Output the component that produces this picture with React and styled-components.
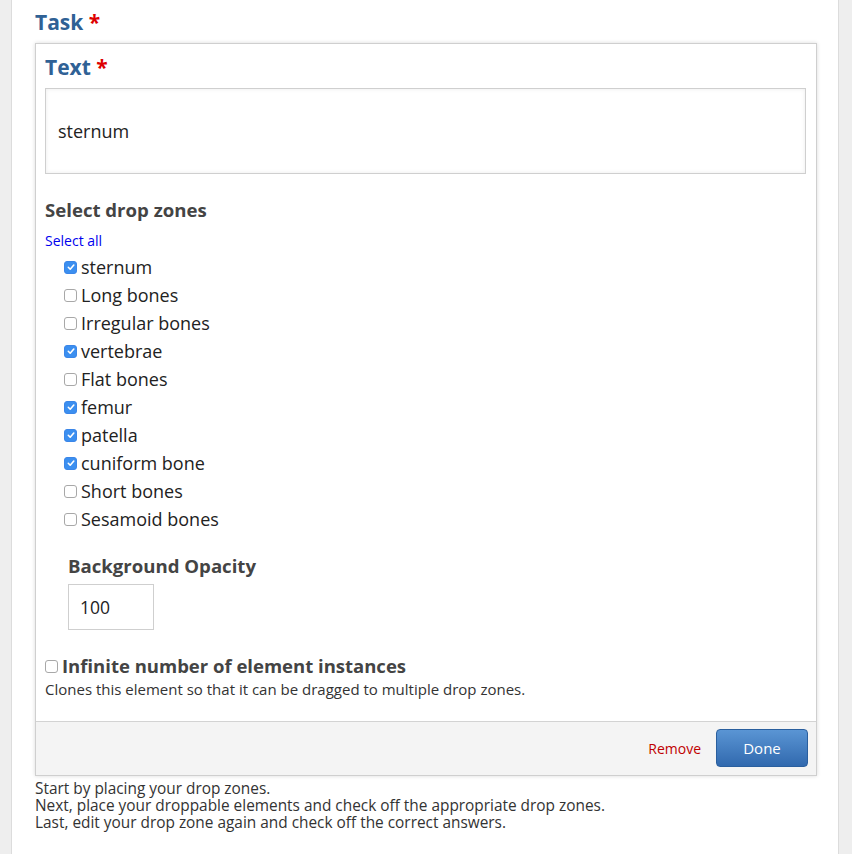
import styled, { createGlobalStyle } from "styled-components";

const GlobalStyle = createGlobalStyle`
  body {
    margin: 0;
    background: #eeeeee;
    font-family: "Open Sans", "Liberation Sans", sans-serif;
    color: #333;
  }
`;

const zones = [
  { id: 1, label: "sternum", checked: true },
  { id: 2, label: "Long bones", checked: false },
  { id: 3, label: "Irregular bones", checked: false },
  { id: 4, label: "vertebrae", checked: true },
  { id: 5, label: "Flat bones", checked: false },
  { id: 6, label: "femur", checked: true },
  { id: 7, label: "patella", checked: true },
  { id: 8, label: "cuniform bone", checked: true },
  { id: 9, label: "Short bones", checked: false },
  { id: 10, label: "Sesamoid bones", checked: false },
];

function Check({ checked }) {
  return (
    <CheckBox $checked={checked}>
      {checked && (
        <svg width="10" height="10" viewBox="0 0 10 10">
          <path
            d="M2.3 5.3 L4.2 7.2 L7.8 3"
            fill="none"
            stroke="#fff"
            strokeWidth="1.6"
            strokeLinecap="round"
            strokeLinejoin="round"
          />
        </svg>
      )}
    </CheckBox>
  );
}

function App() {
  return (
    <>
      <GlobalStyle />
      <Panel>
        <Title>
          Task <Req>*</Req>
        </Title>
        <Card>
          <CardBody>
            <Title>
              Text <Req>*</Req>
            </Title>
            <TextField>sternum</TextField>

            <SubTitle $top={24}>Select drop zones</SubTitle>
            <SelectAll href="#">Select all</SelectAll>
            <ZoneList>
              {zones.map((z) => (
                <ZoneRow key={z.id}>
                  <Check checked={z.checked} />
                  {z.label}
                </ZoneRow>
              ))}
            </ZoneList>

            <OpacityGroup>
              <SubTitle $top={21}>Background Opacity</SubTitle>
              <SmallField>100</SmallField>
            </OpacityGroup>

            <InfiniteRow>
              <Check checked={false} />
              Infinite number of element instances
            </InfiniteRow>
            <Description>
              Clones this element so that it can be dragged to multiple drop
              zones.
            </Description>
          </CardBody>
          <CardFooter>
            <RemoveLink href="#">Remove</RemoveLink>
            <DoneButton>Done</DoneButton>
          </CardFooter>
        </Card>
        <Help>
          <HelpLine>Start by placing your drop zones.</HelpLine>
          <HelpLine>
            Next, place your droppable elements and check off the appropriate
            drop zones.
          </HelpLine>
          <HelpLine>
            Last, edit your drop zone again and check off the correct answers.
          </HelpLine>
        </Help>
      </Panel>
    </>
  );
}

const Panel = styled.div`
  margin: 0 13px 0 11px;
  min-height: 854px;
  box-sizing: border-box;
  background: #fff;
  border-left: 1px solid #dcdcdc;
  border-right: 1px solid #dcdcdc;
  padding: 9px 21px 0 23px;
`;

const Title = styled.div`
  font-size: 21px;
  font-weight: 700;
  line-height: 26px;
  color: #2f6195;
`;

const Req = styled.span`
  color: #dd0000;
`;

const Card = styled.div`
  margin-top: 8px;
  border: 1px solid #cfcfcf;
  box-shadow: 0 0 4px rgba(0, 0, 0, 0.15);
  background: #fff;
`;

const CardBody = styled.div`
  padding: 10px 10px 21px 9px;
`;

const TextField = styled.div`
  margin-top: 8px;
  height: 84px;
  border: 1px solid #cfcfcf;
  box-shadow: inset 0 0 4px rgba(0, 0, 0, 0.08);
  display: flex;
  align-items: center;
  padding: 0 12px;
  font-size: 18px;
  color: #222;
`;

const SubTitle = styled.div`
  margin-top: ${(p) => p.$top}px;
  font-size: 18.6px;
  font-weight: 700;
  line-height: 24px;
  color: #444;
`;

const SelectAll = styled.a`
  display: block;
  margin-top: 10px;
  font-size: 14px;
  line-height: 18px;
  color: #0000ee;
  text-decoration: none;
`;

const ZoneList = styled.div`
  display: flex;
  flex-direction: column;
  padding-left: 19px;
  margin-top: 3px;
`;

const ZoneRow = styled.label`
  display: flex;
  align-items: center;
  gap: 4px;
  height: 28px;
  font-size: 18px;
  color: #222;
`;

const CheckBox = styled.span`
  width: 13px;
  height: 13px;
  border-radius: 3px;
  box-sizing: border-box;
  display: inline-flex;
  align-items: center;
  justify-content: center;
  flex-shrink: 0;
  border: 1px solid ${(p) => (p.$checked ? "#3b86e8" : "#a8a8a8")};
  background: ${(p) => (p.$checked ? "#3b8ff0" : "#fff")};
`;

const OpacityGroup = styled.div`
  display: flex;
  flex-direction: column;
  align-items: flex-start;
  padding-left: 23px;
`;

const SmallField = styled.div`
  margin-top: 6px;
  height: 44px;
  border: 1px solid #cfcfcf;
  display: flex;
  align-items: center;
  padding-left: 11px;
  box-sizing: content-box;
  width: 73px;
  font-size: 17.5px;
  color: #222;
`;

const InfiniteRow = styled.label`
  display: flex;
  align-items: center;
  gap: 4px;
  margin-top: 24px;
  font-size: 18.5px;
  font-weight: 700;
  line-height: 24px;
  color: #444;
`;

const Description = styled.div`
  font-size: 15px;
  line-height: 22px;
  color: #333;
`;

const CardFooter = styled.div`
  display: flex;
  justify-content: flex-end;
  align-items: center;
  gap: 15px;
  border-top: 1px solid #d3d3d3;
  background: #f4f4f4;
  padding: 7px 8px 8px 10px;
`;

const RemoveLink = styled.a`
  font-size: 14px;
  color: #c00000;
  text-decoration: none;
`;

const DoneButton = styled.button`
  width: 92px;
  height: 38px;
  border: 1px solid #2a5f9e;
  border-radius: 4px;
  background: linear-gradient(#5a95d4, #3169ae);
  color: #fff;
  font-family: inherit;
  font-size: 15px;
`;

const Help = styled.div`
  margin-top: 4px;
  display: flex;
  flex-direction: column;
`;

const HelpLine = styled.div`
  height: 17px;
  font-size: 15.4px;
  line-height: 17px;
  color: #333;
  white-space: nowrap;
`;

export default App;
